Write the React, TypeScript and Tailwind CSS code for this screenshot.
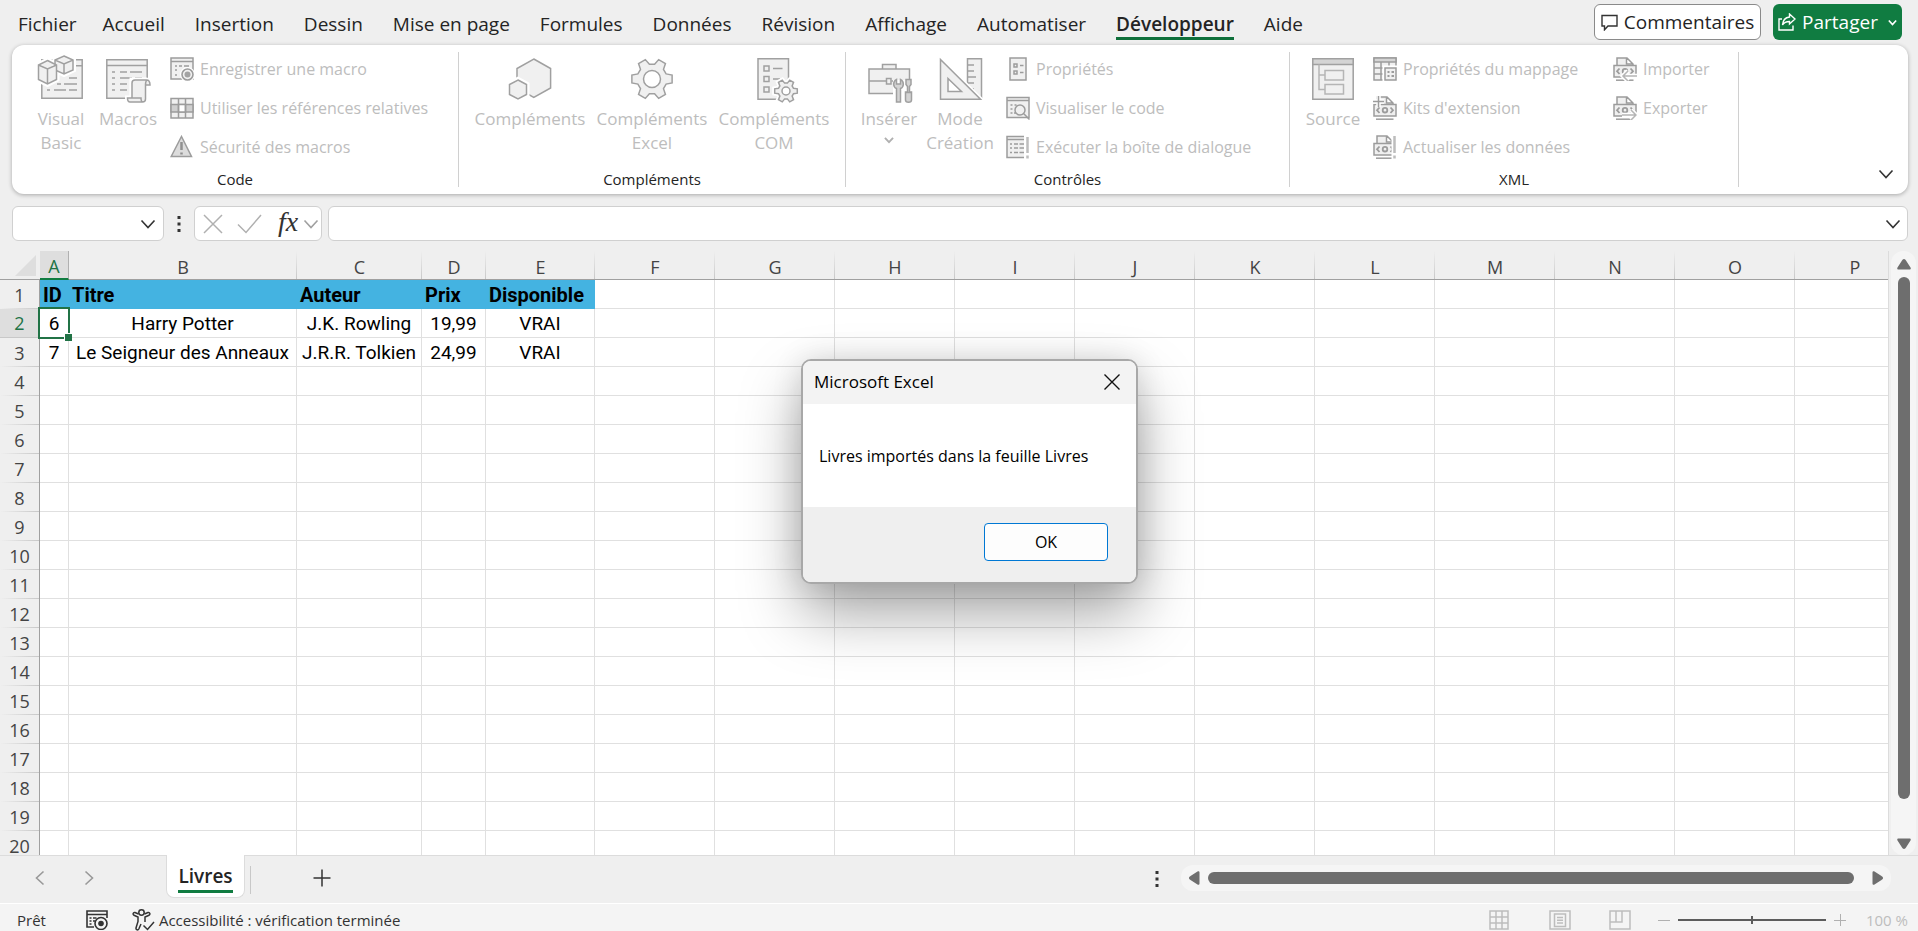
import { useState, type ReactNode } from "react";
import clsx from "clsx";

const tabs = [
  "Fichier",
  "Accueil",
  "Insertion",
  "Dessin",
  "Mise en page",
  "Formules",
  "Données",
  "Révision",
  "Affichage",
  "Automatiser",
  "Développeur",
  "Aide",
];

const columns = [
  { name: "A", width: 29 },
  { name: "B", width: 228 },
  { name: "C", width: 125 },
  { name: "D", width: 64 },
  { name: "E", width: 109 },
  ..."FGHIJKLMNOP".split("").map((name) => ({ name, width: 120 })),
];

const rowCount = 20;
const tableWidth = columns.reduce((sum, c) => sum + c.width, 40);

const data = [
  ["ID", "Titre", "Auteur", "Prix", "Disponible"],
  ["6", "Harry Potter", "J.K. Rowling", "19,99", "VRAI"],
  ["7", "Le Seigneur des Anneaux", "J.R.R. Tolkien", "24,99", "VRAI"],
];

/* ---------- icons ---------- */

function BigIcon({ children }: { children: ReactNode }) {
  return (
    <svg
      width="48"
      height="48"
      viewBox="0 0 48 48"
      fill="#f0f0f0"
      stroke="#a0a0a0"
      strokeWidth="1.5"
      className="shrink-0 overflow-visible"
      aria-hidden="true"
    >
      {children}
    </svg>
  );
}

function SmallIcon({ children }: { children: ReactNode }) {
  return (
    <svg
      width="24"
      height="24"
      viewBox="0 0 24 24"
      fill="#f0f0f0"
      stroke="#9c9c9c"
      strokeWidth="1.5"
      className="shrink-0"
      aria-hidden="true"
    >
      {children}
    </svg>
  );
}

function gearPath(cx: number, cy: number, outer: number, inner: number) {
  const points: string[] = [];
  const add = (radius: number, deg: number) => {
    const a = (deg * Math.PI) / 180;
    points.push(
      `${(cx + radius * Math.cos(a)).toFixed(2)} ${(cy + radius * Math.sin(a)).toFixed(2)}`,
    );
  };
  for (let i = 0; i < 6; i++) {
    const a = i * 60;
    add(inner, a - 20);
    add(outer, a - 11);
    add(outer, a + 11);
    add(inner, a + 20);
  }
  return `M${points.join("L")}Z`;
}

function VisualBasicIcon() {
  return (
    <BigIcon>
      <path d="M4.8 5.8h40.4v38.4H4.8z" />
      <path d="M4.8 11.8h40.4" />
      <path d="M32 24h8M20 30h4M27 30h13M10 36h3M17 36h12M32 36h8" />
      <path d="M10.500 6l9.500 4.500v15L10.500 30.500 1.500 26V10.500z" stroke="#fff" strokeWidth="5" />
      <path d="M27 2l9.500 4v10L27 20.500 18 16V6z" stroke="#fff" strokeWidth="5" />
      <path d="M27 2l9 4v10l-9 4-9-4V6zM18 6l9 4 9-4M27 10v10" />
      <path d="M10.500 6.500l9 4.500v14.500l-9 4.500-9-4.500V11zM1.500 11l9 4 9-4M10.500 15v15" />
    </BigIcon>
  );
}

function MacrosIcon() {
  return (
    <BigIcon>
      <path d="M2.800 5.800h40.400v38.400H2.800z" />
      <path d="M2.800 11.500h40.400" />
      <path d="M8 18h3M16 18h7M26 18h12M8 24h3M16 24h12M31 24h7M8 30h3M16 30h7M8 36h3M16 36h7" />
      <path
        d="M28 26h14c3 0 4 2 4 5h-4v14c0 2-1 3-3 3H26c-2 0-2.500-2-2.500-4H28z"
        stroke="#fff"
        strokeWidth="5"
      />
      <path d="M28 44V29c0-2 1-3 3-3h11.500c2.500 0 3.500 2 3.500 5h-4.500v14c0 2-1 3-3 3H26c-2 0-2.500-2-2.500-4H37c0 2 .5 4 2 4M41.500 31c0-3 0-4 1.500-5" />
    </BigIcon>
  );
}

function HexagonsIcon() {
  return (
    <BigIcon>
      <path d="M27.800 5l16.800 9.500v19.500l-16.800 9.500-16.800-9.500V14.500z" />
      <path d="M12 26l8.500 4.500v10L12 45l-8.500-4.500v-10z" stroke="#fff" strokeWidth="6" />
      <path d="M12 26l8.500 4.500v10L12 45l-8.500-4.500v-10z" />
    </BigIcon>
  );
}

function GearIcon() {
  return (
    <BigIcon>
      <path d={gearPath(24, 25, 20.5, 15)} />
      <circle cx="24" cy="25" r="8.500" fill="#fff" />
    </BigIcon>
  );
}

function ComIcon() {
  return (
    <BigIcon>
      <path d="M8 4.800h30.500v40.500H8z" />
      <path d="M14 12h5v5h-5zM14 22.500h5v5h-5zM14 33h5v5h-5zM23 14.500h9.500M23 25h7" />
      <path d={gearPath(36, 37, 11.5, 8)} stroke="#fff" strokeWidth="5" />
      <path d={gearPath(36, 37, 11.5, 8)} />
      <circle cx="36" cy="37" r="4" fill="#fff" />
    </BigIcon>
  );
}

function ToolboxIcon() {
  return (
    <BigIcon>
      <path d="M17.500 15v-4.500h13.500V15M4 15h40.500v24.500H4zM4 27h17.500M26.500 27H44" />
      <path d="M21.500 24.500h4.500v5.500h-4.500z" />
      <path d="M33.500 26v22M43.500 26v22" stroke="#fff" strokeWidth="11" />
      <path
        d="M31.500 25.500c-4 2-3.500 7.500 0 9V48h4V34.500c3.500-1.500 4-7 0-9v4.500h-4z"
        fill="#d4d4d4"
      />
      <path
        d="M41 25.500h5v5l-1.500 2v5.500h2v8c0 3-6 3-6 0v-8h2v-5.500l-1.500-2zM40 38.500h7"
        fill="#d4d4d4"
      />
    </BigIcon>
  );
}

function DesignIcon() {
  return (
    <BigIcon>
      <path d="M31.500 4.800h14v40h-14zM32 11h6M32 17h6M32 23h8M32 29h6M32 35h6" />
      <path d="M4.500 5l40.500 40.300H4.500z" stroke="#fff" strokeWidth="4" />
      <path d="M4.500 5.500l40 39.800h-40z" />
      <path d="M12 24.500V37.500h13.500z" fill="#fff" />
    </BigIcon>
  );
}

function SourceIcon() {
  return (
    <BigIcon>
      <path d="M3.800 4.800h40.400v40.400H3.800z" />
      <path d="M3.800 4.800h40.400v5.700H3.800z" fill="#d4d4d4" />
      <path d="M10 10.500v25h6M10 21h6" fill="none" stroke="#b5b5b5" />
      <path d="M16 16.500h18.500v9.500H16zM16 30.500h18.500v9.500H16z" stroke="#b5b5b5" />
    </BigIcon>
  );
}

function RecordMacroIcon() {
  return (
    <SmallIcon>
      <path d="M1 1h22v21H1zM1 4.500h22" />
      <path d="M5 9h2M9 9h3M14 9h5M5 13h2M5 18h2" />
      <circle cx="17.500" cy="17.500" r="7.500" fill="#fff" stroke="none" />
      <circle cx="17.500" cy="17.500" r="5.500" strokeWidth="1.600" />
      <circle cx="17.500" cy="17.500" r="3" fill="#a3a3a3" stroke="none" />
    </SmallIcon>
  );
}

function RelativeIcon() {
  return (
    <SmallIcon>
      <path d="M1 2.500h22v19.500H1z" />
      <path d="M1 8.500h22v7.500H1z" fill="#cfcfcf" />
      <path d="M8.500 8.500h7v7.500h-7z" fill="#fff" />
      <path d="M8.500 2.500V22M15.500 2.500V22" />
    </SmallIcon>
  );
}

function WarningIcon() {
  return (
    <SmallIcon>
      <path d="M11.500 1.500L21.500 21.500H1.200z" fill="#dcdcdc" />
      <path d="M11.500 7v8M11.500 17.500v2" strokeWidth="2.500" stroke="#909090" />
    </SmallIcon>
  );
}

function PropertiesIcon() {
  return (
    <SmallIcon>
      <path d="M4 1h16v22H4z" />
      <path d="M8 7h3v3H8zM8 14h3v3H8zM14 8.500h3.500M14 15.500h3.500" />
    </SmallIcon>
  );
}

function ViewCodeIcon() {
  return (
    <SmallIcon>
      <path d="M1 1.500h22v20H1zM1 4.500h22" />
      <path d="M4.500 9h2M8.500 9h2M4.500 13h2M4.500 17h2M8 17h2" />
      <circle cx="14" cy="14" r="5" />
      <path d="M17.800 17.800L23.500 23.500" />
    </SmallIcon>
  );
}

function RunDialogIcon() {
  return (
    <SmallIcon>
      <path d="M18 1.500H1v21h17M1 4.500h17" />
      <path d="M4 9h2M8 9h4M13.500 9H18M4 13h2M8 13h4M13.500 13H18M4 17.500h2M8 17.500h4M13.500 17.500H18" />
      <path d="M21.500 2v16M21.500 20.500v3" strokeWidth="2.500" stroke="#bdbdbd" />
    </SmallIcon>
  );
}

function MapPropertiesIcon() {
  return (
    <SmallIcon>
      <path d="M1 1h22v22H1z" />
      <path d="M1 1h22v4H1z" fill="#d4d4d4" />
      <path d="M8 5v18M16 5v5M1 11h9M1 17h9" />
      <path d="M11.500 10.500h11.500v12.500H11.500z" stroke="#fff" strokeWidth="4" />
      <path d="M12 11h11v12H12z" />
      <path d="M14.500 15h2M18.500 15h2.500M14.500 19h2M18.500 19h2.500" strokeWidth="2.200" />
    </SmallIcon>
  );
}

type XmlVariant = "kit" | "refresh" | "import" | "export";

function XmlIcon({ variant }: { variant: XmlVariant }) {
  return (
    <SmallIcon>
      <path d="M4 8V1h10l6 6v1M13.500 1v6H20" />
      <path d="M1 8.500h22v11.500H1z" />
      <path
        d="M6.500 11.500L4 14.200l2.500 2.800M17.500 11.500l2.500 2.700-2.500 2.800"
        strokeWidth="1.800"
        fill="none"
      />
      <circle cx="12" cy="14.200" r="2.300" strokeWidth="1.800" />
      <path d="M3 23.200h17.500" />
      {variant === "kit" && (
        <>
          <path d="M5.500 0v11M0 5.500h11" stroke="#fff" strokeWidth="4.500" />
          <path d="M5.500 0v11M0 5.500h11" />
        </>
      )}
      {variant === "refresh" && (
        <>
          <path d="M21.500 0v24" stroke="#fff" strokeWidth="6" />
          <path d="M21.500 1v17M21.500 20.500v3" strokeWidth="2.500" stroke="#bdbdbd" />
        </>
      )}
      {variant === "import" && (
        <>
          <path d="M24 19H10M15 14l-5 5 5 5" stroke="#fff" strokeWidth="4.500" fill="none" />
          <path d="M24 19H10M15 14l-5 5 5 5" stroke="#b5b5b5" fill="none" />
        </>
      )}
      {variant === "export" && (
        <>
          <path d="M9 19h14M18 14l5 5-5 5" stroke="#fff" strokeWidth="4.500" fill="none" />
          <path d="M9 19h14M18 14l5 5-5 5" stroke="#b5b5b5" fill="none" />
        </>
      )}
    </SmallIcon>
  );
}

function Chevron({ size = 16, stroke = "#333" }: { size?: number; stroke?: string }) {
  return (
    <svg
      width={size}
      height={size}
      viewBox="0 0 16 16"
      fill="none"
      stroke={stroke}
      strokeWidth={size < 12 ? 3 : 1.6}
      aria-hidden="true"
    >
      <path d="M1.500 4.500L8 11.500l6.500-7" />
    </svg>
  );
}

function Dots() {
  return (
    <svg width="4" height="16" viewBox="0 0 4 16" fill="#333" aria-hidden="true">
      <path d="M.5 0h3v3h-3zM.5 6.500h3v3h-3zM.5 13h3v3h-3z" />
    </svg>
  );
}

/* ---------- ribbon ---------- */

function BigButton({
  icon,
  lines,
  className,
  dropdown,
}: {
  icon: ReactNode;
  lines: string[];
  className: string;
  dropdown?: boolean;
}) {
  return (
    <button
      type="button"
      disabled
      className={clsx("flex flex-col items-center pt-[9px] text-[17px] leading-6 whitespace-nowrap", className)}
    >
      {icon}
      <span className="mt-[5px] flex flex-col items-center">
        {lines.map((line) => (
          <span key={line}>{line}</span>
        ))}
        {dropdown && (
          <span className="pt-1">
            <Chevron size={10} stroke="#b0b0b0" />
          </span>
        )}
      </span>
    </button>
  );
}

function SmallButton({ icon, label }: { icon: ReactNode; label: string }) {
  return (
    <button
      type="button"
      disabled
      className="flex h-[39px] items-center gap-1.5 text-[16px] whitespace-nowrap"
    >
      {icon}
      {label}
    </button>
  );
}

function RibbonGroup({
  title,
  className,
  children,
}: {
  title: string;
  className: string;
  children: ReactNode;
}) {
  return (
    <section className={clsx("flex shrink-0", className)}>
      <div className="flex flex-1 flex-col">
        <div className="flex h-[122px] items-start text-[#bdbdbd]">{children}</div>
        <h2 className="text-center text-[15px] leading-6">{title}</h2>
      </div>
      <div className="my-[7px] w-px bg-[#d0d0d0]" />
    </section>
  );
}

function Ribbon() {
  return (
    <div className="mr-2.5 ml-3 flex h-[149px] rounded-xl bg-white shadow-[0_1px_4px_rgba(0,0,0,0.3)]">
      <RibbonGroup title="Code" className="w-[447px]">
        <BigButton icon={<VisualBasicIcon />} lines={["Visual", "Basic"]} className="ml-4 w-[66px]" />
        <BigButton icon={<MacrosIcon />} lines={["Macros"]} className="w-[68px]" />
        <div className="ml-2 pt-1">
          <SmallButton icon={<RecordMacroIcon />} label="Enregistrer une macro" />
          <SmallButton icon={<RelativeIcon />} label="Utiliser les références relatives" />
          <SmallButton icon={<WarningIcon />} label="Sécurité des macros" />
        </div>
      </RibbonGroup>
      <RibbonGroup title="Compléments" className="w-[387px]">
        <BigButton icon={<HexagonsIcon />} lines={["Compléments"]} className="ml-2.5 w-[122px]" />
        <BigButton icon={<GearIcon />} lines={["Compléments", "Excel"]} className="w-[122px]" />
        <BigButton icon={<ComIcon />} lines={["Compléments", "COM"]} className="w-[122px]" />
      </RibbonGroup>
      <RibbonGroup title="Contrôles" className="w-[444px]">
        <BigButton icon={<ToolboxIcon />} lines={["Insérer"]} dropdown className="ml-2 w-[70px]" />
        <BigButton icon={<DesignIcon />} lines={["Mode", "Création"]} className="w-[72px]" />
        <div className="ml-2.5 pt-1">
          <SmallButton icon={<PropertiesIcon />} label="Propriétés" />
          <SmallButton icon={<ViewCodeIcon />} label="Visualiser le code" />
          <SmallButton icon={<RunDialogIcon />} label="Exécuter la boîte de dialogue" />
        </div>
      </RibbonGroup>
      <RibbonGroup title="XML" className="w-[449px]">
        <BigButton icon={<SourceIcon />} lines={["Source"]} className="ml-2 w-[70px]" />
        <div className="ml-[5px] w-[240px] pt-1">
          <SmallButton icon={<MapPropertiesIcon />} label="Propriétés du mappage" />
          <SmallButton icon={<XmlIcon variant="kit" />} label="Kits d'extension" />
          <SmallButton icon={<XmlIcon variant="refresh" />} label="Actualiser les données" />
        </div>
        <div className="pt-1">
          <SmallButton icon={<XmlIcon variant="import" />} label="Importer" />
          <SmallButton icon={<XmlIcon variant="export" />} label="Exporter" />
        </div>
      </RibbonGroup>
      <button type="button" aria-label="Réduire le ruban" className="mt-auto mr-3.5 mb-3 ml-auto">
        <Chevron />
      </button>
    </div>
  );
}

function TopBar() {
  const [active, setActive] = useState("Développeur");
  return (
    <header className="flex h-[45px] shrink-0 items-start pr-4">
      <nav className="flex gap-[30px] pt-2 pl-[18px] whitespace-nowrap">
        {tabs.map((tab) => (
          <button
            key={tab}
            type="button"
            onClick={() => setActive(tab)}
            className={clsx(
              "h-8 border-b-[3px] text-[19px] leading-8 first:-mr-1",
              active === tab ? "border-[#0f703b] font-semibold" : "border-transparent",
            )}
          >
            {tab}
          </button>
        ))}
      </nav>
      <div className="ml-auto flex gap-3 pt-1 text-[19px]">
        <button
          type="button"
          className="flex h-9 w-[167px] items-center justify-center gap-1.5 rounded-md border border-[#8a8a8a] bg-white"
        >
          <svg
            width="17"
            height="17"
            viewBox="0 0 17 17"
            fill="none"
            stroke="#333"
            strokeWidth="1.400"
            aria-hidden="true"
          >
            <path d="M1 1.500h15v10.500H7L3.500 15.800V12H1z" />
          </svg>
          Commentaires
        </button>
        <button
          type="button"
          className="flex h-9 w-[129px] items-center justify-center gap-1.5 rounded-md bg-[#107c41] text-white"
        >
          <svg
            width="18"
            height="18"
            viewBox="0 0 18 18"
            fill="none"
            stroke="#fff"
            strokeWidth="1.400"
            aria-hidden="true"
          >
            <path d="M4 6H1v11h14v-4.500" />
            <path d="M11.500 1l5.500 5-5.500 5V8.500C8 8.500 6 9.500 4.500 12c.3-4 2.500-7.500 7-8z" />
          </svg>
          Partager
          <span className="pl-1">
            <Chevron size={9} stroke="#fff" />
          </span>
        </button>
      </div>
    </header>
  );
}

function FormulaBar() {
  return (
    <div className="mt-3 mr-2.5 ml-3 flex h-[35px] shrink-0 items-stretch">
      <div className="flex w-[152px] items-center rounded-md border border-[#d0d0d0] bg-white pr-[7px]">
        <input aria-label="Zone Nom" className="min-w-0 flex-1 pl-2 outline-none" />
        <button type="button" aria-label="Liste des noms">
          <Chevron />
        </button>
      </div>
      <div className="flex w-[30px] items-center justify-center">
        <Dots />
      </div>
      <div className="flex w-[128px] items-center rounded-md border border-[#d0d0d0] bg-white pl-2">
        <button type="button" aria-label="Annuler" disabled>
          <svg width="20" height="20" viewBox="0 0 20 20" fill="none" stroke="#b0b0b0" strokeWidth="1.500">
            <path d="M1 1l18 18M19 1L1 19" />
          </svg>
        </button>
        <button type="button" aria-label="Entrer" disabled className="ml-3.5">
          <svg width="25" height="20" viewBox="0 0 25 20" fill="none" stroke="#b0b0b0" strokeWidth="1.500">
            <path d="M1 10.500l8 8L24 1" />
          </svg>
        </button>
        <button
          type="button"
          aria-label="Insérer une fonction"
          className="ml-4 pb-1 font-['Liberation_Serif',serif] text-[28px] leading-7 text-[#333] italic"
        >
          fx
        </button>
        <button type="button" aria-label="Fonctions récentes" className="ml-auto pr-0.5">
          <Chevron stroke="#a0a0a0" />
        </button>
      </div>
      <div className="ml-1.5 flex flex-1 items-center rounded-md border border-[#d0d0d0] bg-white pr-1.5">
        <input aria-label="Barre de formule" className="min-w-0 flex-1 pl-2 outline-none" />
        <button type="button" aria-label="Développer la barre de formule">
          <Chevron />
        </button>
      </div>
    </div>
  );
}

/* ---------- sheet ---------- */

function Sheet() {
  return (
    <div className="min-w-0 flex-1 overflow-hidden border-r border-[#dcdcdc]">
      <table className="table-fixed border-separate border-spacing-0" style={{ width: tableWidth }}>
        <colgroup>
          <col style={{ width: 40 }} />
          {columns.map((c) => (
            <col key={c.name} style={{ width: c.width }} />
          ))}
        </colgroup>
        <thead>
          <tr className="text-[18px] leading-6 text-[#444]">
            <td className="h-[29px] border-b border-[#a0a0a0] p-0">
              <svg width="22" height="21" viewBox="0 0 22 21" className="ml-3.5" aria-hidden="true">
                <path d="M22 0v21H1z" fill="#dedede" />
              </svg>
            </td>
            {columns.map((c) => (
              <th
                key={c.name}
                scope="col"
                className={clsx(
                  "h-[29px] p-0 pt-[3px] font-normal",
                  c.name === "A"
                    ? "border-r border-b-2 border-r-[#b0b0b0] border-b-[#107c41] bg-[#dedede] text-[#217346]"
                    : "border-b border-[#a0a0a0] bg-[linear-gradient(to_bottom,transparent,#c8c8c8)] bg-[length:1px_100%] bg-right bg-no-repeat",
                )}
              >
                {c.name}
              </th>
            ))}
          </tr>
        </thead>
        <tbody>
          {Array.from({ length: rowCount }, (_, r) => (
            <tr key={r}>
              <th
                scope="row"
                className={clsx(
                  "h-[29px] border-r border-[#a0a0a0] p-0 text-[18px] leading-6 font-normal",
                  r === 1
                    ? "border-b border-b-[#c8c8c8] bg-[#dedede] text-[#217346]"
                    : "bg-[linear-gradient(to_right,transparent,#c8c8c8)] bg-[length:100%_1px] bg-bottom bg-no-repeat text-[#444]",
                )}
              >
                {r + 1}
              </th>
              {columns.map((c, i) => {
                const isHeader = r === 0 && i < 5;
                return (
                  <td
                    key={c.name}
                    className={clsx(
                      "relative h-[29px] border-r border-b p-0 pt-0.5 font-['Roboto',sans-serif] leading-6 whitespace-nowrap text-black",
                      isHeader
                        ? "border-[#44b3e1] bg-[#44b3e1] pl-[3px] text-[20px] font-bold"
                        : "border-[#e0e0e0] bg-white text-center text-[19px]",
                    )}
                  >
                    {data[r]?.[i]}
                    {r === 1 && i === 0 && (
                      <>
                        <span className="absolute -inset-0.5 z-10 border-2 border-[#217346]" />
                        <span className="absolute -right-1 -bottom-1 z-10 size-2 border-t border-l border-white bg-[#217346]" />
                      </>
                    )}
                  </td>
                );
              })}
            </tr>
          ))}
        </tbody>
      </table>
    </div>
  );
}

function VerticalScrollbar() {
  return (
    <div className="mx-0.5 flex w-[25px] shrink-0 flex-col items-center rounded-xl bg-[#f5f5f5] pt-2 pb-1.5">
      <svg width="14" height="11" viewBox="0 0 14 11" fill="#6e6e6e" aria-hidden="true">
        <path d="M7 0c1 0 1.500.8 2 1.500l4.500 7c.6 1 .2 2-1 2h-11c-1.200 0-1.600-1-1-2l4.500-7C5.500.8 6 0 7 0z" />
      </svg>
      <div className="mt-[7px] mb-[39px] w-3 flex-1 rounded-md bg-[#6e6e6e]" />
      <svg width="14" height="11" viewBox="0 0 14 11" fill="#6e6e6e" aria-hidden="true">
        <path d="M7 11c-1 0-1.500-.8-2-1.500l-4.500-7c-.6-1-.2-2 1-2h11c1.200 0 1.600 1 1 2l-4.500 7C8.500 10.200 8 11 7 11z" />
      </svg>
    </div>
  );
}

function SheetTabs() {
  return (
    <div className="flex h-12 shrink-0 items-start border-t border-[#dcdcdc]">
      <div className="flex h-11 w-[166px] items-center gap-[33px] pl-8">
        <button type="button" aria-label="Feuille précédente" className="rotate-90">
          <Chevron stroke="#999" />
        </button>
        <button type="button" aria-label="Feuille suivante" className="-rotate-90">
          <Chevron stroke="#999" />
        </button>
      </div>
      <button
        type="button"
        className="-mt-px flex h-[43px] w-[79px] items-start justify-center rounded-b-lg border border-t-0 border-[#dcdcdc] bg-white pt-1.5 text-[19px] font-semibold"
      >
        <span className="h-8 border-b-[3px] border-[#107c41] leading-[30px]">Livres</span>
      </button>
      <div className="mt-2.5 ml-[5px] h-7 w-px bg-[#c8c8c8]" />
      <button type="button" aria-label="Nouvelle feuille" className="mt-[13px] ml-[62px]">
        <svg width="18" height="18" viewBox="0 0 18 18" stroke="#333" strokeWidth="1.500">
          <path d="M9 .5v17M.5 9h17" />
        </svg>
      </button>
      <div className="mt-[15px] ml-auto">
        <Dots />
      </div>
      <div className="mt-[9px] mr-[27px] ml-[22px] flex h-[26px] w-[37%] items-center rounded-xl bg-[#f5f5f5] px-2">
        <svg width="11" height="14" viewBox="0 0 11 14" fill="#6e6e6e" aria-hidden="true">
          <path d="M0 7c0-1 .8-1.500 1.500-2l7-4.500c1-.6 2-.2 2 1v11c0 1.200-1 1.600-2 1l-7-4.500C.8 8.500 0 8 0 7z" />
        </svg>
        <div className="mr-[18px] ml-2 h-3 flex-1 rounded-md bg-[#6e6e6e]" />
        <svg width="11" height="14" viewBox="0 0 11 14" fill="#6e6e6e" aria-hidden="true">
          <path d="M11 7c0-1-.8-1.500-1.500-2l-7-4.500c-1-.6-2-.2-2 1v11c0 1.200 1 1.600 2 1l7-4.500c.7-.5 1.500-1 1.500-2z" />
        </svg>
      </div>
    </div>
  );
}

function StatusBar() {
  return (
    <footer className="flex h-7 shrink-0 items-center overflow-hidden border-t border-white bg-[#f4f4f4] pt-1 pr-2.5 pl-[17px] text-[15px] leading-5 text-[#333]">
      <span>Prêt</span>
      <button type="button" aria-label="Enregistrer une macro" className="ml-10">
        <svg width="22" height="20" viewBox="0 0 22 20" fill="none" stroke="#333" strokeWidth="1.600">
          <path d="M8 17H1V1h20v7M1 4.500h20M3.500 8h2M7 8h3.500M3.500 11h2M7 11h2M3.500 14h2" />
          <circle cx="15" cy="13.500" r="6" />
          <circle cx="15" cy="13.500" r="2.800" fill="#333" stroke="none" />
        </svg>
      </button>
      <button type="button" className="ml-6 flex items-center gap-1">
        <svg
          width="23"
          height="22"
          viewBox="0 0 23 22"
          fill="none"
          stroke="#333"
          strokeWidth="1.500"
          aria-hidden="true"
        >
          <circle cx="9.500" cy="3.500" r="2.700" />
          <path d="M6.500 5L3 3.500C1 3 .5 5.500 2 6.200L6 8v4.500L4 19c-.3 2 2 2.500 2.800 1l2.200-5M12.500 5L16 3.500c2-.5 2.500 2 1 2.700L13 8v5" />
          <path d="M11.500 16.500l4 4L22 13" />
        </svg>
        Accessibilité : vérification terminée
      </button>
      <div className="ml-auto flex items-center text-[#bdbdbd]">
        <button type="button" aria-label="Normal">
          <svg width="20" height="20" viewBox="0 0 20 20" fill="none" stroke="#bdbdbd" strokeWidth="1.500">
            <path d="M1 1h18v18H1zM1 7h18M1 13h18M7 1v18M13 1v18" />
          </svg>
        </button>
        <button type="button" aria-label="Mise en page" className="ml-10">
          <svg width="22" height="20" viewBox="0 0 22 20" fill="none" stroke="#bdbdbd" strokeWidth="1.500">
            <path d="M1 1h20v18H1zM5.500 4h11v12.500h-11zM8 7.500h6M8 10.300h6M8 13h6" />
          </svg>
        </button>
        <button type="button" aria-label="Aperçu des sauts de page" className="ml-[38px]">
          <svg width="22" height="20" viewBox="0 0 22 20" fill="none" stroke="#bdbdbd" strokeWidth="1.500">
            <path d="M1 1h20v18H1zM1 12h12V1M7 1v11" />
          </svg>
        </button>
        <button type="button" aria-label="Zoom arrière" className="ml-[27px]">
          <svg width="12" height="12" viewBox="0 0 12 12" stroke="#b0b0b0">
            <path d="M0 6.500h12" />
          </svg>
        </button>
        <input
          type="range"
          aria-label="Zoom"
          defaultValue={50}
          className="mx-2 h-2 w-[148px] appearance-none bg-[linear-gradient(#5c5c5c,#5c5c5c)] bg-[length:100%_2px] bg-center bg-no-repeat [&::-webkit-slider-thumb]:h-2 [&::-webkit-slider-thumb]:w-0.5 [&::-webkit-slider-thumb]:appearance-none [&::-webkit-slider-thumb]:bg-[#5c5c5c]"
        />
        <button type="button" aria-label="Zoom avant">
          <svg width="12" height="12" viewBox="0 0 12 12" stroke="#b0b0b0">
            <path d="M0 6.500h12M6.500 0v12" />
          </svg>
        </button>
        <span className="ml-5">100 %</span>
      </div>
    </footer>
  );
}

function MessageBox() {
  return (
    <div
      role="dialog"
      aria-labelledby="msg-title"
      className="absolute top-[359px] left-[801px] z-20 w-[337px] overflow-hidden rounded-[10px] border-2 border-[#a8a8a8] bg-white text-[16px] text-black shadow-[0_30px_60px_rgba(0,0,0,0.35),0_0_30px_rgba(0,0,0,0.12)]"
    >
      <div className="flex h-[43px] items-center justify-between bg-[#f3f3f3] pr-4 pb-0.5 pl-[11px]">
        <h1 id="msg-title" className="text-[17px]">
          Microsoft Excel
        </h1>
        <button type="button" aria-label="Fermer">
          <svg width="16" height="16" viewBox="0 0 16 16" stroke="#111" strokeWidth="1.400">
            <path d="M.5.5l15 15M15.500.5l-15 15" />
          </svg>
        </button>
      </div>
      <p className="flex h-[103px] items-center pl-4 whitespace-nowrap">
        Livres importés dans la feuille Livres
      </p>
      <div className="flex h-[75px] items-start justify-end bg-[#efefef] pt-4 pr-7">
        <button type="button" className="h-[38px] w-[124px] rounded-sm border border-[#0078d4] bg-[#fdfdfd]">
          OK
        </button>
      </div>
    </div>
  );
}

export default function App() {
  return (
    <div className="relative flex h-screen flex-col overflow-hidden bg-[#efefef] font-['Open_Sans','Noto_Sans',sans-serif] text-[#242424]">
      <TopBar />
      <Ribbon />
      <FormulaBar />
      <main className="mt-2.5 flex min-h-0 flex-1">
        <Sheet />
        <VerticalScrollbar />
      </main>
      <SheetTabs />
      <StatusBar />
      <MessageBox />
    </div>
  );
}
